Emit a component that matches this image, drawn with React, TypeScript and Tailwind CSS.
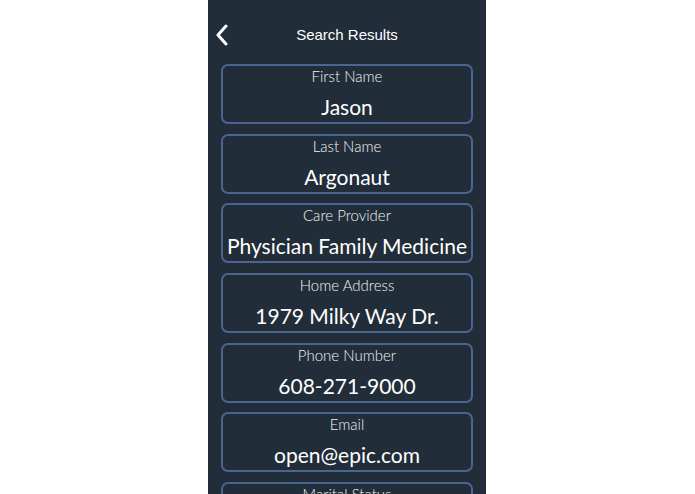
import React from 'react'

const fields = [
  { label: 'First Name', value: 'Jason' },
  { label: 'Last Name', value: 'Argonaut' },
  { label: 'Care Provider', value: 'Physician Family Medicine' },
  { label: 'Home Address', value: '1979 Milky Way Dr.' },
  { label: 'Phone Number', value: '608-271-9000' },
  { label: 'Email', value: 'open@epic.com' },
  { label: 'Marital Status', value: 'Married' },
]

function ChevronLeft() {
  return (
    <svg width="14" height="22" viewBox="0 0 14 22" fill="none">
      <path d="M11 2 L3 11 L11 20" stroke="white" strokeWidth="3" strokeLinecap="round" strokeLinejoin="round" />
    </svg>
  )
}

export default function App() {
  return (
    <div className="flex h-[494px] w-full justify-center overflow-hidden bg-white">
      <div className="ml-[-1px] flex h-full w-[278px] flex-col overflow-hidden bg-[#222d3a]">
        <div className="relative flex h-[64px] shrink-0 items-center justify-center pt-[6px]">
          <button className="absolute left-[7px] top-[24px]">
            <ChevronLeft />
          </button>
          <span className="font-['Liberation_Sans',sans-serif] text-[15px] text-white">Search Results</span>
        </div>
        <div className="flex flex-col gap-[9.7px] px-[13px]">
          {fields.map((f) => (
            <div
              key={f.label}
              className="flex h-[60px] shrink-0 flex-col items-center rounded-[7px] border-2 border-[#4a6590] pt-[1px] font-['Lato',sans-serif]"
            >
              <span className="text-[15px] font-light leading-[18px] text-[#f2f3f5]">{f.label}</span>
              <span className="mt-[7px] text-[21px] leading-[30px] text-white">{f.value}</span>
            </div>
          ))}
        </div>
      </div>
    </div>
  )
}
